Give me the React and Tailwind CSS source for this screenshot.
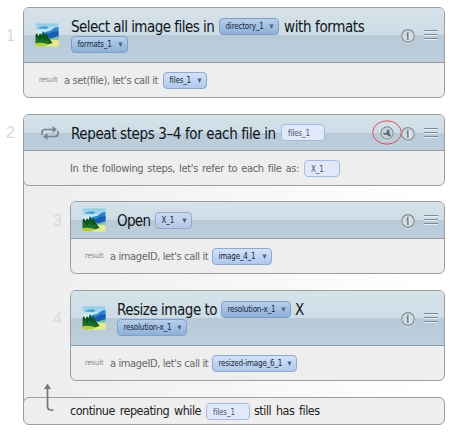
import React from 'react';

function Scene() {
  return (
    <svg width="24" height="24" viewBox="0 0 24 24" className="block shrink-0">
      <defs>
        <linearGradient id="sky" x1="0" y1="0" x2="0" y2="1">
          <stop offset="0" stopColor="#8cc8e6" />
          <stop offset="0.5" stopColor="#e2f6fb" />
          <stop offset="1" stopColor="#b9e2ee" />
        </linearGradient>
      </defs>
      <rect x="0.5" y="0.5" width="23" height="23" fill="url(#sky)" />
      <path d="M2 5.500 Q8 1.500 14 4.500 L11 6 Z" fill="#4b9fce" />
      <path d="M8 10 L12 8.500 L15 8 L20 4.500 L23.500 4 V15 H8 Z" fill="#2b84cc" />
      <path d="M12 12 L18 9 L23.500 8 V14 L16 17 Z" fill="#1b5db4" />
      <path d="M12 17 L23.500 13 V18 H12 Z" fill="#79c3a6" />
      <path d="M0.500 18 L14 16.500 L23.500 17 V23.500 H0.500 Z" fill="#e6ec8c" />
      <path d="M0.500 12 L2 10 L3.500 13 L5 10 L6.500 12 L8 8 L10 12 L11.500 10 L14 15 L17.500 20 L14 21 L0.500 21 Z" fill="#0d5525" />
      <path d="M1 16 L3 14 L5 18 L8 14 L10 18 L12 16 L16 20 L1 21 Z" fill="#1d7028" />
      <path d="M0.500 20 Q8 19 15 21.500 L9 23.500 H0.500 Z" fill="#b4cd45" />
    </svg>
  );
}

function Info() {
  return (
    <svg width="16" height="16" viewBox="0 0 16 16" className="block">
      <circle cx="8" cy="8.700" r="6.500" fill="none" stroke="#f3f7f9" strokeWidth="1" />
      <circle cx="8" cy="8" r="6.300" fill="#cfdbe2" stroke="#858e94" strokeWidth="1.200" />
      <path d="M6.700 6.500 H8 V12" fill="none" stroke="#596268" strokeWidth="1.300" />
      <path d="M9.300 5 V12" stroke="#edf3f6" strokeWidth="1" />
      <circle cx="7.900" cy="4.500" r="0.800" fill="#596268" />
    </svg>
  );
}

function Wrench() {
  return (
    <svg width="30" height="26" viewBox="0 0 30 26" className="block">
      <ellipse cx="15" cy="12.500" rx="14.300" ry="11.700" fill="none" stroke="#d5505f" strokeWidth="1" />
      <circle cx="15" cy="13.700" r="6.400" fill="none" stroke="#f3f7f9" />
      <circle cx="15" cy="13" r="6.200" fill="#c8d4dc" stroke="#858e94" strokeWidth="1.200" />
      <path d="M14.500 9.500 C17 9 18.300 11 17.300 13 L19 15.500 L17.500 16.800 L15 14.800 C13 15.500 11 14.300 11 12.500 L13.500 13.200 L15.200 11.800 Z" fill="#5f6b73" />
    </svg>
  );
}

function Menu() {
  return (
    <span className="flex w-[14px] flex-col gap-[3px]">
      <span className="h-px bg-[#7f898f] shadow-[0_1px_0_#e6eef2]" />
      <span className="h-px bg-[#7f898f] shadow-[0_1px_0_#e6eef2]" />
      <span className="h-px bg-[#7f898f] shadow-[0_1px_0_#e6eef2]" />
    </span>
  );
}

function Loop() {
  return (
    <svg width="20" height="14" viewBox="0 0 20 14" className="block shrink-0" fill="none" stroke="#76858e" strokeWidth="1.700">
      <path d="M2 9 V6 Q2 3.500 5 3.500 H13.500" />
      <path d="M12.500 0 L17 3.500 L12.500 7 Z" fill="#76858e" stroke="none" />
      <path d="M18 5 V7.500 Q18 10.500 15 10.500 H6" />
      <path d="M7.500 7 L3 10.500 L7.500 14 Z" fill="#76858e" stroke="none" />
    </svg>
  );
}

function Title({ w, track = 'tracking-[-0.38px]', children }) {
  return <span className={`block h-[18px] shrink-0 whitespace-pre text-[15px] leading-[20px] text-[#101418] ${w} ${track}`}>{children}</span>;
}

function Note({ w, track = 'tracking-[-0.38px]', children }) {
  return <span className={`block h-[16px] shrink-0 whitespace-pre text-[11px] leading-[18px] text-[#666] ${w} ${track}`}>{children}</span>;
}

const tones = {
  dark: 'border-[#7f9fc6] bg-linear-to-b from-[#b7cfeb] to-[#8eb0d8]',
  mid: 'border-[#8ea9d0] bg-linear-to-b from-[#d3e2f8] to-[#aec8ec]',
  soft: 'border-[#91a9cc] bg-linear-to-b from-[#cbdaf0] to-[#b3c8e4]',
};

function Chip({ w, tone = 'dark', children }) {
  return (
    <span className={`flex h-[17px] shrink-0 items-center justify-between rounded-[4px] border pr-[4px] pl-[5.500px] text-[8px] leading-[15px] tracking-[-0.2px] whitespace-pre text-[#17263a] ${tones[tone]} ${w}`}>
      {children}
      <svg width="5" height="5" viewBox="0 0 5 5" className="shrink-0"><path d="M0.300 0.500 H4.700 L2.500 5 Z" fill="#4c6687" /></svg>
    </span>
  );
}

function Field({ w, children }) {
  return <span className={`block h-[17px] shrink-0 rounded-[4px] border border-[#a5bce2] bg-[#e0e8fa] pl-[6px] text-[8px] leading-[17px] tracking-[-0.15px] whitespace-pre text-[#4c5361] ${w}`}>{children}</span>;
}

const glossy = 'bg-[linear-gradient(to_bottom,#d7e2e9_0%,#cddce6_50%,#b8cad8_50%,#bdcfdc_100%)]';

function Actions({ wrench }) {
  return (
    <span className="ml-auto flex shrink-0 items-center pr-[6px]">
      {wrench && <span className="-mr-[2px]"><Wrench /></span>}
      <span className="mt-[2px]"><Info /></span>
      <span className="mb-px ml-[8px]"><Menu /></span>
    </span>
  );
}

function StepNo({ className, children }) {
  return <span className={`block shrink-0 text-right font-['Liberation_Sans',sans-serif] text-[16px] leading-[18px] text-[#dadada] ${className}`}>{children}</span>;
}

const frame = 'overflow-hidden rounded-[6px] border border-[#999fa3] bg-[#eee]';

export default function App() {
  return (
    <main className="h-[434px] w-[457px] overflow-hidden bg-white pt-[7px] font-['DejaVu_Sans_Condensed','DejaVu_Sans',sans-serif] [font-stretch:semi-condensed]">
      <section className="flex">
        <StepNo className="mt-[20px] mr-[8px] w-[15px]">1</StepNo>
        <div className={`h-[91px] w-[422px] ${frame}`}>
          <div className={`flex h-[55px] items-center border-b border-[#8f9ba4] pl-[11px] ${glossy}`}>
            <Scene />
            <div className="ml-[12px]">
              <div className="flex items-center">
                <Title w="w-[148px]" track="tracking-[-0.53px]">Select all image files in</Title>
                <Chip w="w-[60px]">directory_1</Chip>
                <span className="w-[5px]" />
                <Title w="w-[82px]">with formats</Title>
              </div>
              <div className="mt-px"><Chip w="w-[57px]">formats_1</Chip></div>
            </div>
            <Actions />
          </div>
          <div className="flex h-[34px] items-center pl-[15px]">
            <span className="w-[25px] text-[7.500px] tracking-[-0.1px] text-[#888]">result</span>
            <Note w="w-[99px]">a set(file), let's call it</Note>
            <Chip w="w-[44px]" tone="mid">files_1</Chip>
          </div>
        </div>
      </section>

      <section className="mt-[16px] flex">
        <StepNo className="mt-[10px] mr-[8px] w-[15px]">2</StepNo>
        <div className="w-[422px]">
          <div className={`relative z-10 h-[72px] ${frame}`}>
            <div className={`flex h-[36px] items-center border-b border-[#8f9ba4] pl-[16px] ${glossy}`}>
              <Loop />
              <span className="w-[11px]" />
              <Title w="w-[210px]">Repeat steps 3–4 for each file in</Title>
              <Field w="w-[44px]">files_1</Field>
              <Actions wrench />
            </div>
            <div className="flex h-[34px] items-center pl-[46px] [word-spacing:1.200px]">
              <Note w="w-[234px]" track="tracking-[-0.33px]">In the following steps, let's refer to each file as:</Note>
              <Field w="w-[36px]">X_1</Field>
            </div>
          </div>

          <div className="-mt-[5px] h-[221px] border-l border-[#999fa3] bg-[linear-gradient(to_right,#ededed_0%,#f6f6f6_45%,#fefefe_90%,#fff_100%)] pt-[20px]">
            <div className="flex">
              <StepNo className="mt-[11px] mr-[8px] w-[38px]">3</StepNo>
              <div className={`h-[73px] w-[375px] ${frame}`}>
                <div className={`flex h-[37px] items-center border-b border-[#8f9ba4] pl-[11px] ${glossy}`}>
                  <Scene />
                  <span className="w-[11px]" />
                  <Title w="w-[38px]" track="tracking-[-0.7px]">Open</Title>
                  <Chip w="w-[37px]" tone="soft">X_1</Chip>
                  <Actions />
                </div>
                <div className="flex h-[34px] items-center pl-[14px]">
                  <span className="w-[25px] text-[7.500px] tracking-[-0.1px] text-[#888]">result</span>
                  <Note w="w-[102px]">a imageID, let's call it</Note>
                  <Chip w="w-[60px]" tone="mid">image_4_1</Chip>
                </div>
              </div>
            </div>

            <div className="mt-[16px] flex">
              <StepNo className="mt-[20px] mr-[8px] w-[38px]">4</StepNo>
              <div className={`h-[91px] w-[375px] ${frame}`}>
                <div className={`flex h-[55px] items-center border-b border-[#8f9ba4] pl-[11px] ${glossy}`}>
                  <Scene />
                  <div className="ml-[11px]">
                    <div className="flex items-center">
                      <Title w="w-[104px]" track="tracking-[-0.48px]">Resize image to</Title>
                      <Chip w="w-[70px]">resolution-x_1</Chip>
                      <span className="w-[4px]" />
                      <Title w="w-[12px]">X</Title>
                    </div>
                    <div className="mt-px"><Chip w="w-[70px]">resolution-x_1</Chip></div>
                  </div>
                  <Actions />
                </div>
                <div className="flex h-[34px] items-center pl-[14px]">
                  <span className="w-[25px] text-[7.500px] tracking-[-0.1px] text-[#888]">result</span>
                  <Note w="w-[102px]">a imageID, let's call it</Note>
                  <Chip w="w-[85px]" tone="mid">resized-image_6_1</Chip>
                </div>
              </div>
            </div>
          </div>

          <div className="relative -mt-[5px] flex h-[28px] items-center rounded-[6px] border border-[#999fa3] bg-[#eee] pl-[46px] text-[12.500px] leading-[16px] tracking-[-0.5px] text-[#222] [word-spacing:1.700px]">
            <svg width="12" height="30" viewBox="0 0 12 30" className="absolute -top-[15px] left-[19px]" fill="none">
              <path d="M4.500 5 V23 Q4.500 27 8 27 H10.500" stroke="#777" strokeWidth="1.700" />
              <path d="M4.500 0.500 L8 6 H1 Z" fill="#777" />
            </svg>
            <span className="w-[136px] whitespace-pre">continue repeating while</span>
            <Field w="w-[44px]">files_1</Field>
            <span className="ml-[4px] whitespace-pre">still has files</span>
          </div>
        </div>
      </section>
    </main>
  );
}
